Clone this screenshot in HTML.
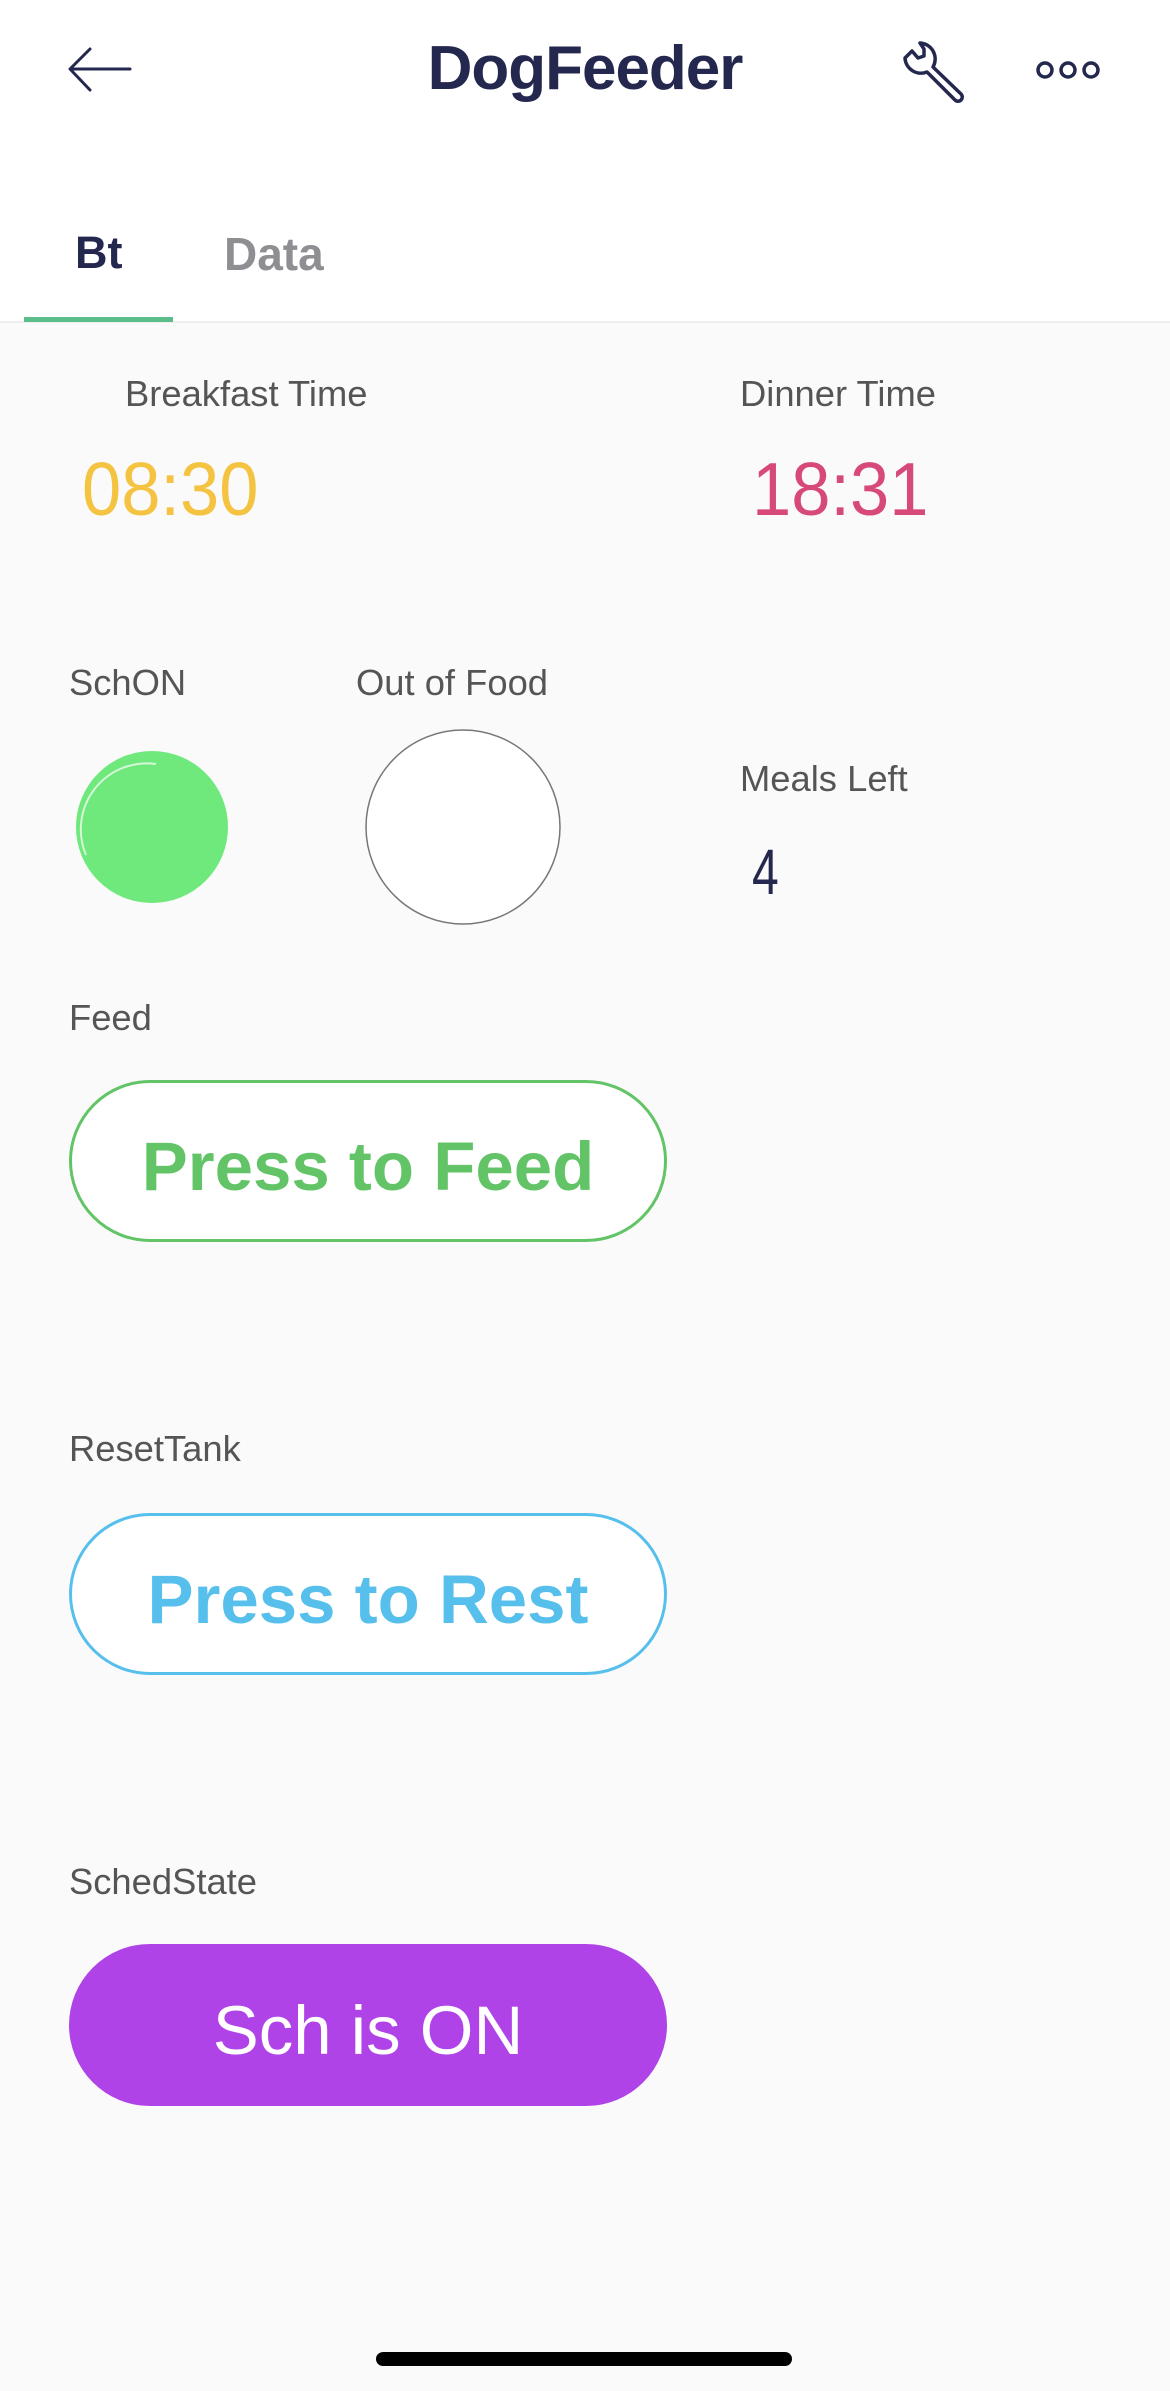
<!DOCTYPE html>
<html><head><meta charset="utf-8"><style>
body{margin:0;width:1170px;height:2391px;background:#fafafa;position:relative;overflow:hidden;font-family:"Liberation Sans",sans-serif;}
.hdr{position:absolute;left:0;top:0;width:1170px;height:321px;background:#fff;border-bottom:2px solid #eeeeee;}
.a{position:absolute;white-space:nowrap;}
.lbl{font-size:36px;color:#555;transform:scaleX(1.01);transform-origin:left top;}
.btn{position:absolute;left:69px;width:598px;height:162px;box-sizing:border-box;border-radius:81px;display:flex;align-items:center;justify-content:center;font-size:69px;font-weight:bold;padding-top:10px;}
</style></head><body>
<div class="hdr"></div>
<svg class="a" style="left:66px;top:46px" width="70" height="48" viewBox="0 0 70 48"><path d="M64 23H5M24 3L4 23L24 44" fill="none" stroke="#24284f" stroke-width="3" stroke-linecap="round" stroke-linejoin="round"/></svg>
<div class="a" style="left:0;width:1170px;top:33px;text-align:center;font-size:62px;font-weight:bold;color:#24284f;letter-spacing:-1px">DogFeeder</div>
<svg class="a" style="left:900px;top:38px" width="68" height="68" viewBox="0 0 68 68"><path d="M20 5 A16 16 0 0 1 33 29 L61 56 A4 4 0 0 1 55 62 L27 34 A16 16 0 0 1 5 20 L12 13 L18 20 L24 18 L24 11 Z" fill="none" stroke="#24284f" stroke-width="3.5" stroke-linejoin="round"/></svg>
<svg class="a" style="left:1030px;top:58px" width="80" height="24" viewBox="0 0 80 24"><g fill="none" stroke="#24284f" stroke-width="3.5"><circle cx="15" cy="12" r="7"/><circle cx="38" cy="12" r="7"/><circle cx="61" cy="12" r="7"/></g></svg>
<div class="a" style="left:75px;top:227px;font-size:45px;font-weight:bold;color:#24284f">Bt</div>
<div class="a" style="left:224px;top:227px;font-size:46px;font-weight:bold;color:#8e8e93">Data</div>
<div class="a" style="left:24px;top:317px;width:149px;height:5px;background:#5bbd8a"></div>
<div class="a lbl" style="left:125px;top:373px">Breakfast Time</div>
<div class="a lbl" style="left:740px;top:373px">Dinner Time</div>
<div class="a" style="left:82px;top:446px;font-size:75px;color:#f5c342;transform:scaleX(0.94);transform-origin:left">08:30</div>
<div class="a" style="left:752px;top:446px;font-size:75px;color:#d6497a;transform:scaleX(0.94);transform-origin:left">18:31</div>
<div class="a lbl" style="left:69px;top:662px">SchON</div>
<div class="a lbl" style="left:356px;top:662px">Out of Food</div>
<div class="a lbl" style="left:740px;top:758px">Meals Left</div>
<svg class="a" style="left:0;top:700px" width="600" height="260"><circle cx="152" cy="127" r="76" fill="#6fe87c"/><path d="M86 155 A66 66 0 0 1 156 64" fill="none" stroke="#fff" stroke-opacity="0.7" stroke-width="2"/><circle cx="463" cy="127" r="97" fill="#fff" stroke="#777" stroke-width="1.5"/></svg>
<div class="a" style="left:752px;top:835px;font-size:64px;color:#24284f;font-weight:300;transform:scaleX(0.75);transform-origin:left">4</div>
<div class="a lbl" style="left:69px;top:997px">Feed</div>
<div class="btn" style="top:1080px;border:3px solid #62c467;color:#62c467;background:#fff">Press to Feed</div>
<div class="a lbl" style="left:69px;top:1428px">ResetTank</div>
<div class="btn" style="top:1513px;border:3px solid #56bfec;color:#56bfec;background:#fff">Press to Rest</div>
<div class="a lbl" style="left:69px;top:1861px">SchedState</div>
<div class="btn" style="top:1944px;background:#b043e8;color:#fff;font-weight:normal">Sch is ON</div>
<div class="a" style="left:376px;top:2352px;width:416px;height:14px;border-radius:7px;background:#000"></div>
</body></html>
